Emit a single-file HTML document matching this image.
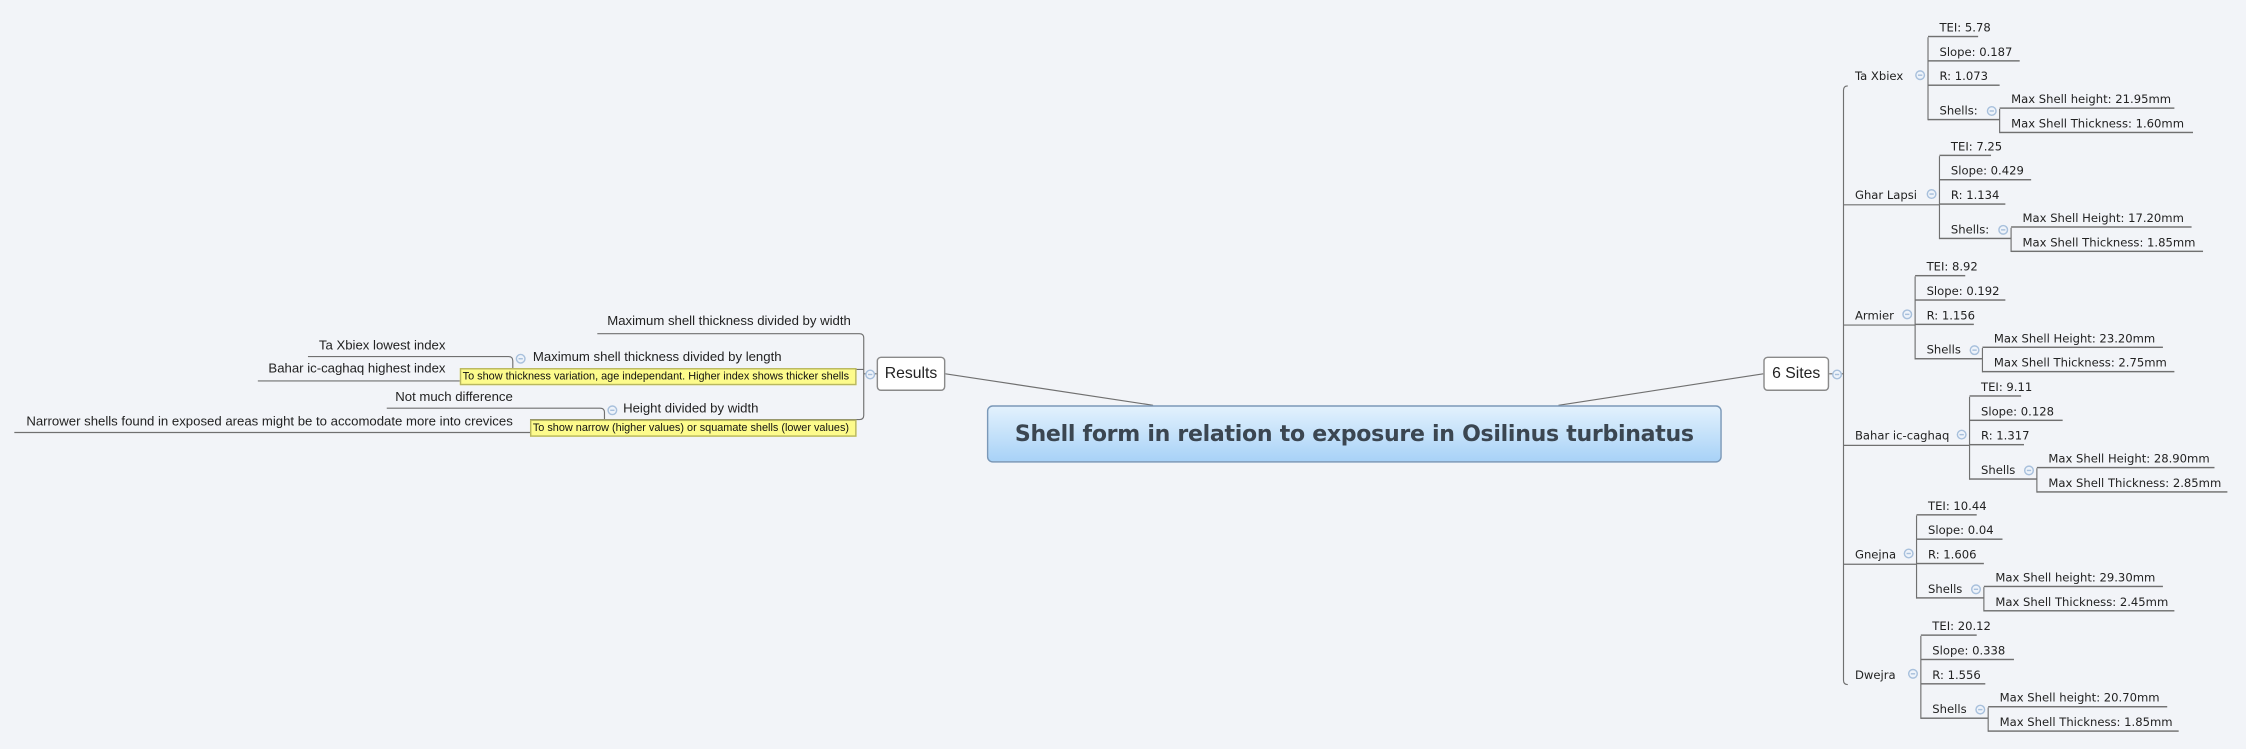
<!DOCTYPE html>
<html><head><meta charset="utf-8"><style>
html,body{margin:0;padding:0;background:#f2f4f8;overflow:hidden;width:2246px;height:749px}
#c{position:absolute;left:0;top:0;width:1568px;height:523px;transform:scale(1.4324,1.4321);transform-origin:0 0;font-family:"DejaVu Sans","Liberation Sans",sans-serif;color:#222}
.i{position:absolute;height:12px;line-height:11px;box-sizing:border-box;border-bottom:1px solid #707070;padding-left:8px;white-space:nowrap;font-size:8.1px}
.l{position:absolute;white-space:nowrap;font-family:"Liberation Sans",sans-serif;font-size:9.2px;line-height:11px;text-align:right}
.ci{position:absolute;width:5px;height:5px;border:1px solid #a8c0dc;border-radius:50%;background:#eef3fa;margin:-3.5px 0 0 -3.5px}
.ci:after{content:"";position:absolute;left:1px;right:1px;top:2px;height:1px;background:#a8c0dc}
.note{position:absolute;background:#fdfb8c;border:1px solid #b9b760;font-family:"Liberation Sans",sans-serif;font-size:7.6px;line-height:10px;padding-left:1px;white-space:nowrap;box-sizing:border-box;height:12px;color:#111}
.box{position:absolute;background:#fff;border:1px solid #8a8a8a;border-radius:3px;font-family:"Liberation Sans",sans-serif;font-size:11px;text-align:center;box-sizing:border-box}
</style></head><body><div id="c">
<svg width="1568" height="523" style="position:absolute;left:0;top:0" stroke="#707070" stroke-width="0.8" fill="none">
<line x1="660" y1="261" x2="805" y2="283"/><line x1="1231" y1="261" x2="1088" y2="283"/>
<path d="M417 233H600Q603 233 603 236V290Q603 293 600 293H370M362 258H603M603 261H612"/>
<path d="M215 249H355Q358 249 358 252V263Q358 266 355 266H180"/>
<path d="M270 285H419Q422 285 422 288V299Q422 302 419 302H10"/>
<path d="M1277 261H1287M1287 63Q1287 60 1290 60M1287 63V475Q1287 478 1290 478"/>
<path d="M1346 26V84M1396 76V93M1354 109V167M1404 159V176M1337 193V251M1384 243V260M1375 277V335M1422 327V344M1338 360V418M1385 410V427M1341 444V502M1388 494V511"/>
<path d="M1287 143H1354M1287 227H1337M1287 311H1375M1287 394H1338"/>
</svg>
<div class="box" style="left:612px;top:249px;width:48px;height:24px;line-height:22px">Results</div>
<div class="ci" style="left:607px;top:261px"></div>
<div class="box" style="left:1231px;top:249px;width:46px;height:24px;line-height:22px">6 Sites</div>
<div class="ci" style="left:1282px;top:261px"></div>
<div style="position:absolute;left:689px;top:283px;width:513px;height:40px;box-sizing:border-box;border:1px solid #7a98b8;border-radius:4px;background:linear-gradient(#e2f1fd,#a8d2f7);font-family:'DejaVu Sans',sans-serif;font-weight:bold;font-size:15.4px;line-height:38px;text-align:center;color:#3b4651;letter-spacing:-0.2px">Shell form in relation to exposure in Osilinus turbinatus</div>

<div class="l" style="right:974px;top:219px">Maximum shell thickness divided by width</div>
<div class="l" style="left:372px;top:244px">Maximum shell thickness divided by length</div>
<div class="ci" style="left:363px;top:250px"></div>
<div class="l" style="right:1257px;top:236px">Ta Xbiex lowest index</div>
<div class="l" style="right:1257px;top:252px">Bahar ic-caghaq highest index</div>
<div class="note" style="left:321px;top:257px;width:277px">To show thickness variation, age independant. Higher index shows thicker shells</div>
<div class="l" style="left:435px;top:280px">Height divided by width</div>
<div class="ci" style="left:427px;top:286px"></div>
<div class="l" style="right:1210px;top:272px">Not much difference</div>
<div class="l" style="right:1210px;top:289px">Narrower shells found in exposed areas might be to accomodate more into crevices</div>
<div class="note" style="left:370px;top:293px;width:228px">To show narrow (higher values) or squamate shells (lower values)</div>

<!-- Ta Xbiex -->
<div class="i" style="left:1287px;top:48px;width:59px;border:0">Ta Xbiex</div><div class="ci" style="left:1340px;top:52px"></div>
<div class="i" style="left:1346px;top:14px;width:35px">TEI: 5.78</div>
<div class="i" style="left:1346px;top:31px;width:64px">Slope: 0.187</div>
<div class="i" style="left:1346px;top:48px;width:50px">R: 1.073</div>
<div class="i" style="left:1346px;top:72px;width:50px">Shells:</div><div class="ci" style="left:1390px;top:77px"></div>
<div class="i" style="left:1396px;top:64px;width:122px">Max Shell height: 21.95mm</div>
<div class="i" style="left:1396px;top:81px;width:135px">Max Shell Thickness: 1.60mm</div>
<!-- Ghar Lapsi -->
<div class="i" style="left:1287px;top:131px;width:67px;border:0">Ghar Lapsi</div><div class="ci" style="left:1348px;top:135px"></div>
<div class="i" style="left:1354px;top:97px;width:36px">TEI: 7.25</div>
<div class="i" style="left:1354px;top:114px;width:64px">Slope: 0.429</div>
<div class="i" style="left:1354px;top:131px;width:46px">R: 1.134</div>
<div class="i" style="left:1354px;top:155px;width:50px">Shells:</div><div class="ci" style="left:1398px;top:160px"></div>
<div class="i" style="left:1404px;top:147px;width:126px">Max Shell Height: 17.20mm</div>
<div class="i" style="left:1404px;top:164px;width:134px">Max Shell Thickness: 1.85mm</div>
<!-- Armier -->
<div class="i" style="left:1287px;top:215px;width:50px;border:0">Armier</div><div class="ci" style="left:1331px;top:219px"></div>
<div class="i" style="left:1337px;top:181px;width:35px">TEI: 8.92</div>
<div class="i" style="left:1337px;top:198px;width:63px">Slope: 0.192</div>
<div class="i" style="left:1337px;top:215px;width:41px">R: 1.156</div>
<div class="i" style="left:1337px;top:239px;width:47px">Shells</div><div class="ci" style="left:1378px;top:244px"></div>
<div class="i" style="left:1384px;top:231px;width:126px">Max Shell Height: 23.20mm</div>
<div class="i" style="left:1384px;top:248px;width:134px">Max Shell Thickness: 2.75mm</div>
<!-- Bahar -->
<div class="i" style="left:1287px;top:299px;width:88px;border:0">Bahar ic-caghaq</div><div class="ci" style="left:1369px;top:303px"></div>
<div class="i" style="left:1375px;top:265px;width:36px">TEI: 9.11</div>
<div class="i" style="left:1375px;top:282px;width:65px">Slope: 0.128</div>
<div class="i" style="left:1375px;top:299px;width:38px">R: 1.317</div>
<div class="i" style="left:1375px;top:323px;width:47px">Shells</div><div class="ci" style="left:1416px;top:328px"></div>
<div class="i" style="left:1422px;top:315px;width:124px">Max Shell Height: 28.90mm</div>
<div class="i" style="left:1422px;top:332px;width:133px">Max Shell Thickness: 2.85mm</div>
<!-- Gnejna -->
<div class="i" style="left:1287px;top:382px;width:51px;border:0">Gnejna</div><div class="ci" style="left:1332px;top:386px"></div>
<div class="i" style="left:1338px;top:348px;width:42px">TEI: 10.44</div>
<div class="i" style="left:1338px;top:365px;width:60px">Slope: 0.04</div>
<div class="i" style="left:1338px;top:382px;width:47px">R: 1.606</div>
<div class="i" style="left:1338px;top:406px;width:47px">Shells</div><div class="ci" style="left:1379px;top:411px"></div>
<div class="i" style="left:1385px;top:398px;width:125px">Max Shell height: 29.30mm</div>
<div class="i" style="left:1385px;top:415px;width:133px">Max Shell Thickness: 2.45mm</div>
<!-- Dwejra -->
<div class="i" style="left:1287px;top:466px;width:54px;border:0">Dwejra</div><div class="ci" style="left:1335px;top:470px"></div>
<div class="i" style="left:1341px;top:432px;width:39px">TEI: 20.12</div>
<div class="i" style="left:1341px;top:449px;width:65px">Slope: 0.338</div>
<div class="i" style="left:1341px;top:466px;width:45px">R: 1.556</div>
<div class="i" style="left:1341px;top:490px;width:47px">Shells</div><div class="ci" style="left:1382px;top:495px"></div>
<div class="i" style="left:1388px;top:482px;width:125px">Max Shell height: 20.70mm</div>
<div class="i" style="left:1388px;top:499px;width:133px">Max Shell Thickness: 1.85mm</div>
</div></body></html>
